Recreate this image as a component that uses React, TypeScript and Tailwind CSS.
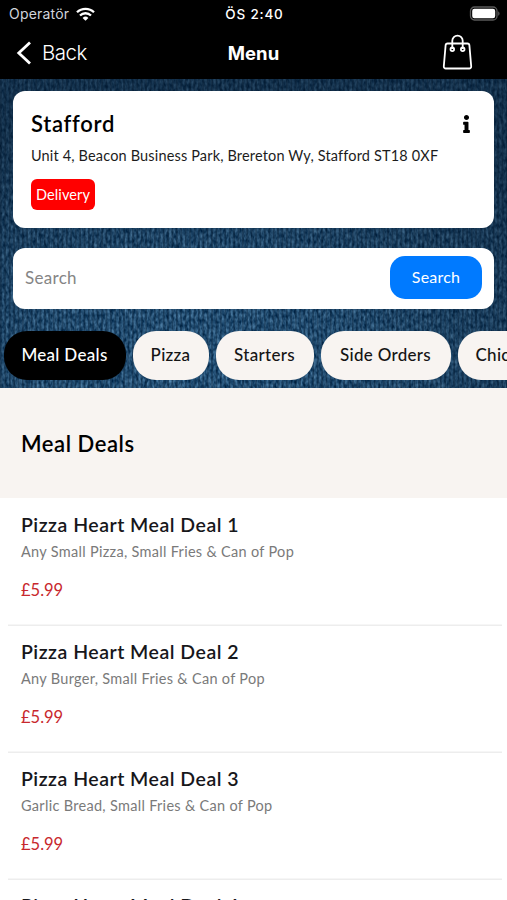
import { useState } from 'react';
import { FaInfo } from 'react-icons/fa';

interface Meal {
  id: number;
  name: string;
  description: string;
  price: string;
}

const categories = [
  { name: 'Meal Deals', width: 'w-[122px]' },
  { name: 'Pizza', width: 'w-[76px]' },
  { name: 'Starters', width: 'w-[98px]' },
  { name: 'Side Orders', width: 'w-[130px]' },
  { name: 'Chicken', width: 'w-[98px]' },
];

const meals: Meal[] = [
  { id: 1, name: 'Pizza Heart Meal Deal 1', description: 'Any Small Pizza, Small Fries & Can of Pop', price: '£5.99' },
  { id: 2, name: 'Pizza Heart Meal Deal 2', description: 'Any Burger, Small Fries & Can of Pop', price: '£5.99' },
  { id: 3, name: 'Pizza Heart Meal Deal 3', description: 'Garlic Bread, Small Fries & Can of Pop', price: '£5.99' },
  { id: 4, name: 'Pizza Heart Meal Deal 4', description: 'Any Wrap, Small Fries & Can of Pop', price: '£5.99' },
];

function StatusBar() {
  return (
    <div className="grid h-7 grid-cols-3 items-center pl-[9px] pr-[7px] font-['Inter',sans-serif] text-[14px] text-white">
      <div className="-mt-px flex items-center gap-[7px]">
        <span className="tracking-[0.2px] text-gray-300">Operatör</span>
        <svg width="19" height="14" viewBox="0 0 19 14" fill="none" stroke="white" strokeWidth="2.3">
          <path d="M1 5.3a12.2 12.2 0 0 1 17 0" />
          <path d="M4 8.5a7.8 7.8 0 0 1 11 0" />
          <path d="M9.5 13.8 6.6 10.9a4.1 4.1 0 0 1 5.8 0z" fill="white" stroke="none" />
        </svg>
      </div>
      <span className="text-center text-[13.5px] font-medium tracking-[0.8px]">ÖS 2:40</span>
      <svg className="-mt-px justify-self-end" width="31" height="15" viewBox="0 0 31 15" fill="none">
        <rect x="1.5" y="1" width="26.5" height="13" rx="4" stroke="#5a5a5a" strokeWidth="1.3" />
        <rect x="3.2" y="2.7" width="23" height="9.6" rx="2.2" fill="white" />
        <path d="M29.2 5.2c1.8.8 1.8 3.8 0 4.6z" fill="#5a5a5a" />
      </svg>
    </div>
  );
}

function NavBar() {
  return (
    <div className="grid h-[51px] grid-cols-3 items-center pb-[2px] pl-4 pr-[34px] text-white">
      <button className="flex items-center gap-[10px]">
        <svg width="16" height="24" viewBox="0 0 16 24" fill="none" stroke="white" strokeWidth="2.8">
          <path d="M14 1.5 2.8 12 14 22.5" />
        </svg>
        <span className="pt-px font-['Inter',sans-serif] text-[20.5px] font-light tracking-[-0.5px]">Back</span>
      </button>
      <h1 className="pl-[18px] pt-[2px] text-center font-['Inter',sans-serif] text-[18.5px] font-bold tracking-[0.1px]">
        Menu
      </h1>
      <svg
        className="-mt-px justify-self-end"
        width="31"
        height="36"
        viewBox="0 0 31 36"
        fill="none"
        stroke="white"
        strokeWidth="1.8"
      >
        <path d="M5.6 9.5h19.8a2 2 0 0 1 2 1.8l1.8 21a2 2 0 0 1-2 2.2H3.8a2 2 0 0 1-2-2.2l1.8-21a2 2 0 0 1 2-1.8z" />
        <path d="M10.3 15V6.8a5.2 5.2 0 0 1 10.4 0V15" />
        <circle cx="10.3" cy="15.3" r="1.8" />
        <circle cx="20.7" cy="15.3" r="1.8" />
      </svg>
    </div>
  );
}

// Woven denim backdrop behind the branch card, the search box and the tabs
function Denim() {
  return (
    <svg className="absolute inset-0 h-full w-full" preserveAspectRatio="none">
      <defs>
        <filter id="weave" x="0" y="0" width="100%" height="100%" colorInterpolationFilters="sRGB">
          <feTurbulence type="fractalNoise" baseFrequency="0.36 0.2" numOctaves="2" seed="7" />
          <feColorMatrix values="0.5 0 0 0 -0.09  0.56 0 0 0 0.06  0.58 0 0 0 0.2  0 0 0 0 1" />
        </filter>
        <pattern id="rib" width="4.4" height="8" patternUnits="userSpaceOnUse">
          <rect width="1.7" height="8" fill="#061a33" opacity="0.38" />
        </pattern>
        <radialGradient id="shade" cx="0.4" cy="0.95" r="0.85">
          <stop offset="0" stopColor="#041426" stopOpacity="0" />
          <stop offset="0.4" stopColor="#041426" stopOpacity="0.12" />
          <stop offset="1" stopColor="#041426" stopOpacity="0.52" />
        </radialGradient>
      </defs>
      <rect width="100%" height="100%" filter="url(#weave)" />
      <rect width="100%" height="100%" fill="url(#rib)" />
      <rect width="100%" height="100%" fill="url(#shade)" />
    </svg>
  );
}

function BranchCard() {
  return (
    <section className="h-[137px] rounded-xl bg-white pl-[18px] pr-[22px] pt-[18px]">
      <div className="flex items-center justify-between">
        <h2 className="text-[22px] font-semibold leading-[30px] tracking-[0.7px] text-black">Stafford</h2>
        <FaInfo className="h-[18px] w-[11px] text-black" />
      </div>
      <p className="mt-[7px] whitespace-nowrap text-[14.5px] leading-5 tracking-[0.16px] text-[#1c1c1c]">
        Unit 4, Beacon Business Park, Brereton Wy, Stafford ST18 0XF
      </p>
      <span className="mt-[13px] flex h-[31px] w-16 items-center justify-center rounded-md bg-[#ff0000] text-[14.5px] tracking-[0.1px] text-white">
        Delivery
      </span>
    </section>
  );
}

function SearchBox() {
  const [query, setQuery] = useState('');

  return (
    <div className="mt-5 flex h-[61px] items-center rounded-xl bg-white pb-[2px] pl-3 pr-3">
      <input
        value={query}
        onChange={e => setQuery(e.target.value)}
        placeholder="Search"
        className="min-w-0 flex-1 text-[17px] tracking-[0.3px] outline-none placeholder:text-[#858585]"
      />
      <button className="h-[43px] w-[92px] rounded-[15px] bg-[#007aff] pb-[2px] text-[16px] tracking-[0.2px] text-white">
        Search
      </button>
    </div>
  );
}

function MealRow({ meal }: { meal: Meal }) {
  return (
    <li className="ml-2 mr-[5px] h-[127px] shrink-0 pl-[13px] pt-[13px] shadow-[0_1px_0_#ededed,inset_0_-1px_0_#f6f6f6]">
      <h3 className="text-[19.5px] font-semibold leading-[27px] tracking-[0.5px] text-[#17171b]">{meal.name}</h3>
      <p className="mt-[4px] text-[14.5px] leading-5 tracking-[0.3px] text-[#7a7a7a]">{meal.description}</p>
      <p className="mt-[16px] text-[16.5px] leading-6 text-[#c8282d]">{meal.price}</p>
    </li>
  );
}

export default function App() {
  const [active, setActive] = useState('Meal Deals');

  return (
    <div className="flex h-screen flex-col overflow-hidden bg-white font-['Lato',sans-serif]">
      <header className="shrink-0 bg-black">
        <StatusBar />
        <NavBar />
      </header>

      <div className="relative h-[309px] shrink-0 overflow-hidden bg-[#17395c]">
        <Denim />
        <div className="relative pt-3">
          <div className="px-[13px]">
            <BranchCard />
            <SearchBox />
          </div>
          <nav className="mt-[22px] flex gap-[7px] overflow-hidden pl-[3.5px]">
            {categories.map(({ name, width }) => (
              <button
                key={name}
                onClick={() => setActive(name)}
                className={`h-[49px] shrink-0 rounded-[23px] pb-px text-[17px] font-medium tracking-[0.3px] ${width} ${
                  active === name ? 'bg-black text-white' : 'bg-[#f8f4f1] text-[#151515]'
                }`}
              >
                {name}
              </button>
            ))}
          </nav>
        </div>
      </div>

      <div className="flex h-[110px] shrink-0 items-center bg-[#f8f4f1] pl-[21px]">
        <h2 className="text-[22px] font-semibold tracking-[0.55px] text-black">{active}</h2>
      </div>

      <ul className="flex flex-col">
        {meals.map(meal => (
          <MealRow key={meal.id} meal={meal} />
        ))}
      </ul>
    </div>
  );
}
